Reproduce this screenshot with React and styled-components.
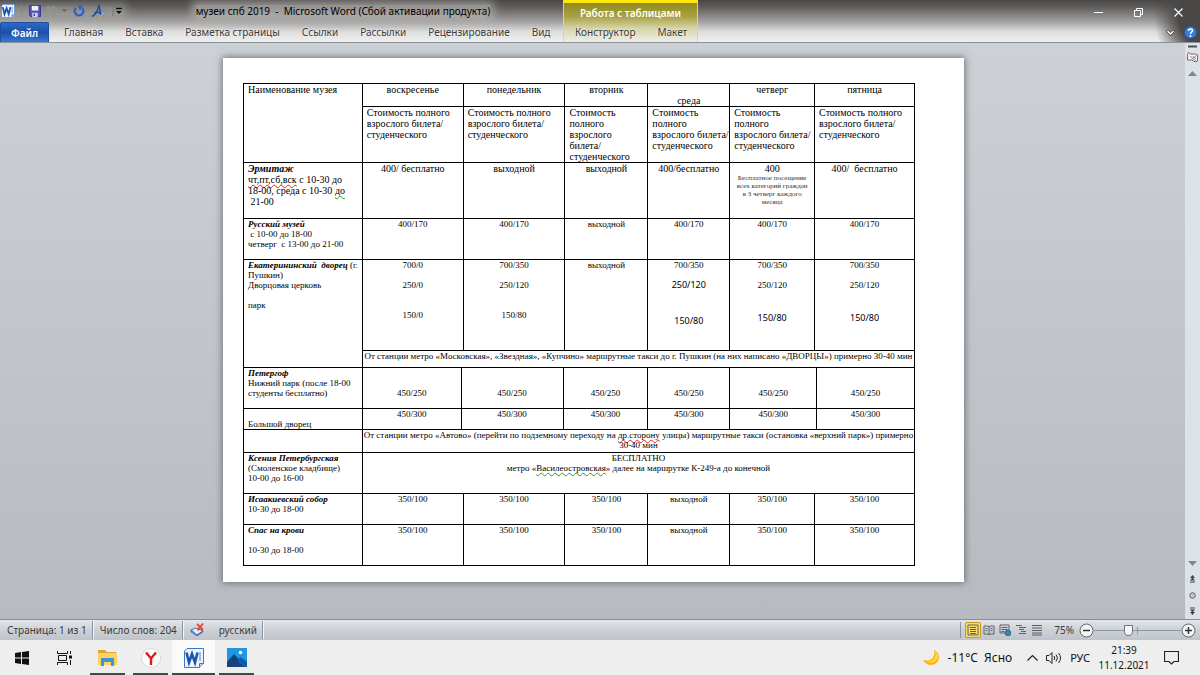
import React from "react";
import styled, { createGlobalStyle } from "styled-components";

const GlobalStyle = createGlobalStyle`
  * {
    box-sizing: border-box;
  }
  body {
    margin: 0;
    font-family: "Noto Sans", "Open Sans", sans-serif;
    font-size: 10px;
    color: #3b3b3b;
  }
  button {
    display: flex;
    align-items: center;
    justify-content: center;
    padding: 0;
    border: 0;
    background: none;
    font: inherit;
    color: inherit;
  }
`;

const Desktop = styled.div`
  display: flex;
  flex-direction: column;
  min-height: 100vh;
`;

/* Шапка окна */
const Header = styled.header`
  display: flex;
  height: 43px;
  overflow: hidden;
  border-bottom: 1px solid #8a9299;
  background: linear-gradient(#4a4846, #5c5a58 15%, #a09f9e 50%, #dcdcdc 75%, #f0f0f0);
`;

const HeaderMain = styled.div`
  display: flex;
  flex-direction: column;
  width: 563px;
`;

const TitleRow = styled.div`
  display: flex;
  align-items: center;
  height: 22px;
`;

const QuickAccess = styled.div`
  display: flex;
  align-items: center;
  gap: 6px;
  width: 123px;
  height: 8px;
  padding-left: 1px;
  background: rgba(190, 189, 188, 0.4);
  box-shadow: 0 0 9px 4px rgba(190, 189, 188, 0.4);
`;

const Title = styled.h1`
  margin: 0 auto;
  font-size: 10px;
  line-height: 12px;
  font-weight: 400;
  white-space: pre;
  color: #000;
  background: rgba(190, 189, 188, 0.6);
  box-shadow: 0 0 10px 4px rgba(190, 189, 188, 0.6);
`;

const Tabs = styled.nav`
  display: flex;
  height: 20px;
`;

const Tab = styled.button`
  padding: 0 11px;
  white-space: nowrap;
  text-shadow: 0 0 3px #fff;
`;

const FileTab = styled(Tab)`
  width: 49px;
  margin-right: 4px;
  border: 1px solid #1e4f9e;
  border-bottom: 0;
  border-radius: 2px 2px 0 0;
  font-weight: 600;
  color: #fff;
  text-shadow: none;
  background: linear-gradient(#2a6acb, #1d4fa6 50%, #3478d6);
`;

const ContextGroup = styled.div`
  width: 135px;
  border: solid #d8d69a;
  border-width: 0 1px;
  border-top: 3px solid #ffe60a;
  background: linear-gradient(#928a1c, #a8a244 35%, #d6d4a8 65%, #efefec);
`;

const ContextTitle = styled.div`
  height: 19px;
  line-height: 21px;
  text-align: center;
  font-weight: 600;
  color: #fff;
`;

const HeaderSide = styled.div`
  flex: 1;
  display: flex;
  flex-direction: column;
  align-items: flex-end;
  background: radial-gradient(ellipse 46px 60px at 100% 40%, #4a4846 45%, rgba(74, 72, 70, 0));
`;

const WindowButtons = styled.div`
  display: flex;
  padding-right: 2px;

  button {
    width: 40px;
    height: 24px;
  }
`;

const HelpRow = styled.div`
  display: flex;
  align-items: center;
  gap: 9px;
  height: 16px;
  padding-right: 3px;
`;

/* Рабочая область */
const Workspace = styled.main`
  flex: 1;
  display: flex;
  border-bottom: 1px solid #8a8d92;
  background: linear-gradient(#cdd1d6, #c3c7cc 45%, #b7bbbf);
`;

const Canvas = styled.div`
  flex: 1;
  padding: 15px 20px 20px 22px;
`;

const Sheet = styled.article`
  max-width: 741px;
  margin: 0 auto;
  padding: 25px 49px 16px 20px;
  background: #fff;
  box-shadow: 0 0 7px 1px #6d747c;
`;

const ScrollBar = styled.div`
  display: flex;
  flex-direction: column;
  width: 15px;
  background: #dde2e9;

  button {
    height: 16px;
  }
  button:first-child {
    height: 6px;
  }
`;

const ScrollTrack = styled.div`
  flex: 1;
`;

/* Таблица музеев */
const Table = styled.table`
  width: 100%;
  table-layout: fixed;
  border-collapse: collapse;
  font-family: "Liberation Serif", "Times New Roman", serif;
  font-size: 9px;
  line-height: 10px;
  color: #000;
`;

const Tr = styled.tr`
  height: ${(props) => props.$height}px;
`;

const Td = styled.td`
  padding: 0 ${(props) => (props.$wide ? 0 : 4)}px;
  border: 1px solid #000;
  vertical-align: top;
  white-space: pre;
  text-align: ${(props) => (props.$left ? "left" : "center")};
  font-size: ${(props) => (props.$large ? 10 : 9)}px;
  line-height: ${(props) => (props.$large ? 11 : 10)}px;
`;

const Th = styled(Td).attrs({ as: "th" })`
  font-weight: 400;
`;

const Name = styled.b`
  font-style: italic;
`;

const Note = styled.div`
  font-size: 7px;
  line-height: 8px;
  color: #333;
`;

const Price = styled.div`
  margin-bottom: ${(props) => props.$gap || 0}px;
  font-family: ${(props) => (props.$sans ? '"Noto Sans", sans-serif' : "inherit")};
`;

const Misspelled = styled.span`
  text-decoration: underline wavy ${(props) => props.$color || "#e02020"} 1px;
  text-decoration-skip-ink: none;
`;

/* Строка состояния */
const StatusBar = styled.footer`
  display: flex;
  align-items: center;
  height: 20px;
  background: linear-gradient(#e3e6ea, #cdd1d7 50%, #bfc4cb);
`;

const StatusItem = styled.div`
  display: flex;
  align-items: center;
  gap: 14px;
  height: 18px;
  padding: 0 5px 0 7px;
  border-right: 1px solid #8d949e;
  box-shadow: 1px 0 #f2f4f6;
  white-space: nowrap;
`;

const StatusSide = styled.div`
  display: flex;
  align-items: center;
  margin-left: auto;
  padding: 0 4px;
  border-left: 1px solid #8d949e;
`;

const ViewButton = styled.button`
  width: 16px;
  height: 16px;
  border-radius: 2px;
  border: 1px solid ${(props) => (props.$active ? "#c79a1e" : "transparent")};
  background: ${(props) => (props.$active ? "#fbdc6a" : "none")};
`;

const ZoomLabel = styled.span`
  margin: 0 5px 0 9px;
`;

const ZoomButton = styled.button`
  width: 15px;
  height: 15px;
`;

const ZoomSlider = styled.input`
  width: 87px;
  height: 14px;
  margin: 0;
  appearance: none;
  background:
    linear-gradient(#8d97a5, #8d97a5) 50% 50% / 1px 7px no-repeat,
    linear-gradient(#8d97a5, #8d97a5) 50% 50% / 100% 1px no-repeat;

  &::-webkit-slider-thumb {
    appearance: none;
    width: 9px;
    height: 11px;
    border: 1px solid #6b7480;
    border-radius: 1px 1px 5px 5px;
    background: #f4f6f8;
  }
`;

/* Панель задач */
const TaskBar = styled.footer`
  display: flex;
  height: 35px;
  background: #eeeeee;
`;

const TaskButton = styled.button`
  width: 43px;
  height: 35px;
  background-color: ${(props) => (props.$active ? "#fafafa" : "transparent")};
  background-image: ${(props) =>
    props.$running || props.$active ? "linear-gradient(#45464a, #45464a)" : "none"};
  background-position: 50% 100%;
  background-size: ${(props) => (props.$active ? "100%" : "35px")} 2px;
  background-repeat: no-repeat;
`;

const Tray = styled.div`
  display: flex;
  align-items: center;
  gap: 8px;
  margin-left: auto;
  padding-right: 21px;
  font-size: 11px;
  color: #111;
`;

const Weather = styled.button`
  gap: 8px;
  margin-right: 7px;
  font-size: 12px;
  white-space: pre;
`;

const Clock = styled.time`
  width: 52px;
  margin-right: 6px;
  font-size: 10px;
  line-height: 15px;
  text-align: center;
`;

const WordIcon = ({ size }) => (
  <svg width={size} height={size} viewBox="0 0 20 20">
    <path d="M3 .5h16.500v15l-4 4H.5V3z" fill="#eef4fc" stroke="#3f76c4" />
    <path d="M15.500 19.500v-4h4" fill="#bcd3f2" stroke="#3f76c4" />
    <path d="M16 4v9" stroke="#9dbbe6" strokeWidth="2" />
    <path d="M2.500 4.500l2.500 10 3-8.500 3 8.500 2.500-10" fill="none" stroke="#1b55a8" strokeWidth="2.600" />
  </svg>
);

const SaveIcon = () => (
  <svg width="12" height="12" viewBox="0 0 13 13">
    <path d="M.5.500h12v12H2l-1.500-1.500z" fill="#5650c0" stroke="#37338f" />
    <path d="M3 1h7v5H3z" fill="#eef0fb" />
    <path d="M3.500 8.500h6V13h-6z" fill="#d0d4ee" />
    <path d="M5 9.500h1.500V12H5z" fill="#37338f" />
  </svg>
);

const UndoIcon = () => (
  <svg width="20" height="12" viewBox="0 0 20 12">
    <path d="M1 1v5h5M1.500 5.500C4 2 8 1 9 4c.8 3-1.500 5-3.500 7" fill="none" stroke="#8f8f8f" strokeWidth="2" />
    <path d="M15 4h5l-2.500 3z" fill="#666" />
  </svg>
);

const RedoIcon = () => (
  <svg width="12" height="12" viewBox="0 0 12 12">
    <path d="M2.800 3a4.400 4.400 0 1 0 6.400 0" fill="none" stroke="#2f62c0" strokeWidth="2.400" />
    <path d="M4.500.500h5.500L7 5.500z" fill="#2f62c0" />
  </svg>
);

const FormatIcon = () => (
  <svg width="15" height="14" viewBox="0 0 15 14">
    <path d="M1 12.500C4 11 7 6 8 1l2 11M3.500 8.500h6" fill="none" stroke="#1f4d9c" strokeWidth="1.500" />
    <path d="M9 12l4-5 1.500 1-4 5z" fill="#a8c4f0" stroke="#3c66aa" strokeWidth=".6" />
    <path d="M8 14l1-3 2.500 1.500z" fill="#e59a2e" />
  </svg>
);

const MoreIcon = () => (
  <svg width="11" height="12" viewBox="0 0 11 12">
    <path d="M1 1v10" stroke="#777" />
    <path d="M4 3.500h6" stroke="#111" strokeWidth="1.500" />
    <path d="M4 6h6L7 9z" fill="#111" />
  </svg>
);

const Arrow = ({ down }) => (
  <svg width="9" height="5" viewBox="0 0 9 5">
    <path d={down ? "M0 0h9L4.500 5z" : "M0 5h9L4.500 0z"} fill="#7a8b8d" />
  </svg>
);

const DoubleArrow = ({ down }) => (
  <svg width="7" height="8" viewBox="0 0 7 8">
    <g transform={down ? "rotate(180 3.500 4)" : undefined} fill="#3c4248">
      <path d="M3.500 0L6 3H1z" />
      <path d="M3.500 2.500L6 5.500H1z" />
      <path d="M1 6.500h5v1H1z" />
    </g>
  </svg>
);

const viewIcons = [
  { label: "Разметка страницы", path: "M1 1h10v10H1zM3 3.500h6M3 5.500h6M3 7.500h6M3 9.500h6" },
  { label: "Режим чтения", path: "M1 2h4l1 1 1-1h4v8H7l-1 1-1-1H1zM6 3v8M2.500 4.500h2M2.500 6.500h2M7.500 4.500h2M7.500 6.500h2" },
  { label: "Веб-документ", path: "M1 1h9v8H1zM2.500 3.500h6M2.500 5.500h6M2.500 7.500h3", globe: true },
  { label: "Структура", path: "M1 1.500h6M4 3.500h7M4 5.500h5M6 7.500h5M4 9.500h7" },
  { label: "Черновик", path: "M1 1.500h10M1 4h10M1 6.500h10M1 9h10M1 11h10" },
];

const tabs = ["Главная", "Вставка", "Разметка страницы", "Ссылки", "Рассылки", "Рецензирование", "Вид"];

// Сетка мельче видимых столбцов: в строках Петергофа границы чуть сдвинуты.
const columns = [119, 99, 2, 100, 2, 83, 82, 85, 2, 98];
const regular = [1, 2, 2, 1, 1, 1, 2];
const shifted = [1, 1, 2, 2, 1, 2, 1];

const long = "Стоимость полного\nвзрослого билета/\nстуденческого";
const medium = "Стоимость\nполного\nвзрослого билета/\nстуденческого";

const days = ["воскресенье", "понедельник", "вторник", "\nсреда", "четверг", "пятница"];
const fares = [long, long, "Стоимость\nполного\nвзрослого\nбилета/\nстуденческого", medium, medium, long];

const Cells = ({ items, spans = regular, large }) =>
  items.map((item, i) => (
    <Td key={i} colSpan={spans[i + 1]} $large={large} $left={items === fares}>
      {item}
    </Td>
  ));

const Palace = ({ prices, sans = [], gap = 20 }) => (
  <>
    <Price $gap={10}>{prices[0]}</Price>
    <Price $gap={gap} $sans={sans[0]}>{prices[1]}</Price>
    <Price $sans={sans[1]}>{prices[2]}</Price>
  </>
);

const MuseumTable = () => (
  <Table>
    <colgroup>
      {columns.map((width, i) => (
        <col key={i} style={{ width: `${(width / 672) * 100}%` }} />
      ))}
    </colgroup>
    <tbody>
      <Tr $height={23}>
        <Th rowSpan={2} $left $large>Наименование музея</Th>
        {days.map((day, i) => (
          <Th key={day} scope="col" colSpan={regular[i + 1]} $large>{day}</Th>
        ))}
      </Tr>
      <Tr $height={56}>
        <Cells items={fares} large />
      </Tr>
      <Tr $height={56}>
        <Th scope="row" $left $large>
          <Name>Эрмитаж</Name>{"\n"}
          <Misspelled>чт,пт,сб,вск</Misspelled> с 10-30 до{"\n"}
          18-00, среда с 10-30 <Misspelled $color="#2a9a2a">до</Misspelled>{"\n 21-00"}
        </Th>
        <Cells
          large
          items={[
            "400/ бесплатно",
            "выходной",
            "выходной",
            "400/бесплатно",
            <>
              400
              <Note>{"Бесплатное посещение\nвсех категорий граждан\nв 3 четверг каждого\nмесяца"}</Note>
            </>,
            "400/  бесплатно",
          ]}
        />
      </Tr>
      <Tr $height={41}>
        <Th scope="row" $left><Name>Русский музей</Name>{"\n с 10-00 до 18-00\nчетверг  с 13-00 до 21-00"}</Th>
        <Cells items={["400/170", "400/170", "выходной", "400/170", "400/170", "400/170"]} />
      </Tr>
      <Tr $height={91}>
        <Th scope="row" rowSpan={2} $left>
          <Name>Екатерининский  дворец</Name>{" (г.\nПушкин)\nДворцовая церковь\n\nпарк"}
        </Th>
        <Cells
          items={[
            <Palace prices={["700/0", "250/0", "150/0"]} />,
            <Palace prices={["700/350", "250/120", "150/80"]} />,
            "выходной",
            <Palace prices={["700/350", "250/120", "150/80"]} sans={[true, true]} gap={26} />,
            <Palace prices={["700/350", "250/120", "150/80"]} sans={[false, true]} gap={23} />,
            <Palace prices={["700/350", "250/120", "150/80"]} sans={[false, true]} gap={23} />,
          ]}
        />
      </Tr>
      <Tr $height={17}>
        <Td colSpan={9} $wide>
          От станции метро «Московская», «Звездная», «Купчино» маршрутные такси до г. Пушкин (на них написано «ДВОРЦЫ») примерно 30-40 мин
        </Td>
      </Tr>
      <Tr $height={41}>
        <Th scope="row" $left><Name>Петергоф</Name>{"\nНижний парк (после 18-00\nстуденты бесплатно)"}</Th>
        <Cells spans={shifted} items={Array(6).fill("\n\n450/250")} />
      </Tr>
      <Tr $height={21}>
        <Th scope="row" $left>{"\nБольшой дворец"}</Th>
        <Cells spans={shifted} items={Array(6).fill("450/300")} />
      </Tr>
      <Tr $height={23}>
        <Td />
        <Td colSpan={9} $wide>
          От станции метро «Автово» (перейти по подземному переходу на <Misspelled>др.сторону</Misspelled> улицы) маршрутные такси (остановка «верхний парк») примерно{"\n30-40 мин"}
        </Td>
      </Tr>
      <Tr $height={41}>
        <Th scope="row" $left><Name>Ксения Петербургская</Name>{"\n(Смоленское кладбище)\n10-00 до 16-00"}</Th>
        <Td colSpan={9}>
          БЕСПЛАТНО{"\n"}метро «<Misspelled $color="#2a9a2a">Василеостровская</Misspelled>» далее на маршрутке К-249-а до конечной
        </Td>
      </Tr>
      <Tr $height={31}>
        <Th scope="row" $left><Name>Исаакиевский собор</Name>{"\n10-30 до 18-00"}</Th>
        <Cells items={["350/100", "350/100", "350/100", "выходной", "350/100", "350/100"]} />
      </Tr>
      <Tr $height={41}>
        <Th scope="row" $left><Name>Спас на крови</Name>{"\n\n10-30 до 18-00"}</Th>
        <Cells items={["350/100", "350/100", "350/100", "выходной", "350/100", "350/100"]} />
      </Tr>
    </tbody>
  </Table>
);

const WindowHeader = () => (
  <Header>
    <HeaderMain>
      <TitleRow>
        <QuickAccess>
          <WordIcon size={14} />
          <svg width="2" height="12"><path d="M.5 0v12" stroke="#8a8a8a" /></svg>
          <button aria-label="Сохранить"><SaveIcon /></button>
          <button aria-label="Отменить"><UndoIcon /></button>
          <button aria-label="Повторить"><RedoIcon /></button>
          <button aria-label="Формат"><FormatIcon /></button>
          <button aria-label="Настройка панели"><MoreIcon /></button>
        </QuickAccess>
        <Title>музеи спб 2019  -  Microsoft Word (Сбой активации продукта)</Title>
      </TitleRow>
      <Tabs>
        <FileTab>Файл</FileTab>
        {tabs.map((tab) => (
          <Tab key={tab}>{tab}</Tab>
        ))}
      </Tabs>
    </HeaderMain>
    <ContextGroup>
      <ContextTitle>Работа с таблицами</ContextTitle>
      <Tabs>
        <Tab>Конструктор</Tab>
        <Tab>Макет</Tab>
      </Tabs>
    </ContextGroup>
    <HeaderSide>
      <WindowButtons>
        <button aria-label="Свернуть">
          <svg width="9" height="9"><path d="M0 4.500h9" stroke="#fff" /></svg>
        </button>
        <button aria-label="Восстановить">
          <svg width="9" height="9" fill="none" stroke="#fff"><path d="M.5 2.500h6v6h-6zM2.500 2.500v-2h6v6h-2" /></svg>
        </button>
        <button aria-label="Закрыть">
          <svg width="9" height="9"><path d="M.5.500l8 8M8.500.500l-8 8" stroke="#fff" strokeWidth="1.200" /></svg>
        </button>
      </WindowButtons>
      <HelpRow>
        <button aria-label="Лента">
          <svg width="9" height="7" fill="none">
            <path d="M1 1.500l3.500 3.500L8 1.500" stroke="#444" strokeWidth="3" />
            <path d="M1.500 2l3 3 3-3" stroke="#fff" strokeWidth="1.500" />
          </svg>
        </button>
        <button aria-label="Справка">
          <svg width="13" height="13" viewBox="0 0 13 13">
            <circle cx="6.500" cy="6.500" r="6" fill="#3c7bd6" stroke="#2358a8" />
            <path d="M4.500 5c0-3 4-2.500 4-.5C8.500 6 6.500 6 6.500 8" fill="none" stroke="#fff" strokeWidth="1.500" />
            <circle cx="6.500" cy="10" r="1" fill="#fff" />
          </svg>
        </button>
      </HelpRow>
    </HeaderSide>
  </Header>
);

const VerticalScroll = () => (
  <ScrollBar>
    <button aria-label="Разделить">
      <svg width="15" height="6"><path d="M3 3.500h9" stroke="#4b5157" strokeWidth="2" /></svg>
    </button>
    <button aria-label="Линейка">
      <svg width="11" height="11" viewBox="0 0 11 11" fill="#f3eef0" stroke="#75696e">
        <path d="M.5 2.500l1-2 2 1.500h5l2 1v6l-2 1-4-2h-4z" />
        <path d="M3 4l6 5M6 4l3 3M9 3.500l-4 4" strokeWidth=".7" />
      </svg>
    </button>
    <button aria-label="Вверх"><Arrow /></button>
    <ScrollTrack />
    <button aria-label="Вниз"><Arrow down /></button>
    <button aria-label="Предыдущая страница"><DoubleArrow /></button>
    <button aria-label="Выбор объекта">
      <svg width="7" height="7"><circle cx="3.500" cy="3.500" r="2.800" fill="#c2c5c9" stroke="#62676d" /></svg>
    </button>
    <button aria-label="Следующая страница"><DoubleArrow down /></button>
  </ScrollBar>
);

const Status = () => (
  <StatusBar>
    <StatusItem>Страница: 1 из 1</StatusItem>
    <StatusItem>Число слов: 204</StatusItem>
    <StatusItem>
      <svg width="15" height="14" viewBox="0 0 15 14">
        <path d="M1 7l5-2 7 3-6 4z" fill="#e9effa" stroke="#4a6db4" />
        <path d="M1 7v2l6 4 6-4V8l-6 4z" fill="#7f9cd6" stroke="#36569c" strokeWidth=".6" />
        <path d="M7 1l6 6M13 .5L7.500 7.500" stroke="#e8452c" strokeWidth="1.800" />
      </svg>
      русский
    </StatusItem>
    <StatusSide>
      {viewIcons.map((view, i) => (
        <ViewButton key={view.label} aria-label={view.label} $active={i === 0}>
          <svg width="12" height="12" viewBox="0 0 12 12">
            <path d={view.path} fill="none" stroke="#5c6168" />
            {view.globe && <circle cx="9" cy="9" r="2.800" fill="#2f8fae" stroke="#246b8c" />}
          </svg>
        </ViewButton>
      ))}
      <ZoomLabel>75%</ZoomLabel>
      <ZoomButton aria-label="Уменьшить">
        <svg width="15" height="15">
          <circle cx="7.500" cy="7.500" r="6.500" fill="#f4f5f7" stroke="#62676e" />
          <path d="M4 7.500h7" stroke="#333" strokeWidth="1.500" />
        </svg>
      </ZoomButton>
      <ZoomSlider type="range" aria-label="Масштаб" defaultValue={38} />
      <ZoomButton aria-label="Увеличить">
        <svg width="15" height="15">
          <circle cx="7.500" cy="7.500" r="6.500" fill="#f4f5f7" stroke="#62676e" />
          <path d="M4 7.500h7M7.500 4v7" stroke="#333" strokeWidth="1.500" />
        </svg>
      </ZoomButton>
    </StatusSide>
  </StatusBar>
);

const WindowsBar = () => (
  <TaskBar>
    <TaskButton aria-label="Пуск">
      <svg width="14" height="14" viewBox="0 0 14 14">
        <path d="M0 2l6-.9v5.400H0zM7 1l7-1v6.500H7zM0 7.500h6V13l-6-.9zM7 7.500h7V14l-7-1z" fill="#111" />
      </svg>
    </TaskButton>
    <TaskButton aria-label="Представление задач">
      <svg width="16" height="14" viewBox="0 0 16 14" fill="none" stroke="#111">
        <path d="M.5 0v2.500h10V0M.5 14v-2.500h10V14M1.500 4.500h8v5h-8zM13.500 0v3M13.500 9v5" />
        <path d="M12 4.500h3v3h-3z" fill="#111" stroke="none" />
      </svg>
    </TaskButton>
    <TaskButton aria-label="Проводник" $running>
      <svg width="19" height="17" viewBox="0 0 19 17">
        <path d="M0 1h7l2 2h9v4H0z" fill="#e0a52a" />
        <path d="M0 4h19v12H0z" fill="#fbd35e" />
        <path d="M3 9h13v8h-3v-4H6v4H3z" fill="#3d95dc" />
      </svg>
    </TaskButton>
    <TaskButton aria-label="Яндекс.Браузер" $running>
      <svg width="20" height="20" viewBox="0 0 20 20">
        <circle cx="10" cy="10" r="9.500" fill="#fbfbfb" stroke="#d8d8d8" />
        <path d="M5 4.500l5 6 5-6M10 10v7" fill="none" stroke="#dc1a1a" strokeWidth="2.400" />
      </svg>
    </TaskButton>
    <TaskButton aria-label="Word" $active>
      <WordIcon size={20} />
    </TaskButton>
    <TaskButton aria-label="Фотографии" $running>
      <svg width="20" height="19" viewBox="0 0 20 19">
        <path d="M0 0h20v19H0z" fill="#2196e3" />
        <path d="M0 14l7-8 12 13H0z" fill="#17407c" />
        <path d="M10 12l4-3 6 5v5h-4z" fill="#0f5ba8" />
        <circle cx="13.500" cy="4.500" r="1.800" fill="#fff" />
      </svg>
    </TaskButton>
    <Tray>
      <Weather>
        <svg width="17" height="17" viewBox="0 0 17 17">
          <path d="M11 1c7 3 6 11 1 14-4 2-9 1-12-4 8 2 13-3 11-10z" fill="#fbb615" />
          <path d="M12 2c4 3 4 9-1 11-3 1-6 0-8-1 8 1 11-4 9-10z" fill="#ffd74a" />
        </svg>
        -11°C  Ясно
      </Weather>
      <svg width="11" height="7"><path d="M.5 6.500l5-5 5 5" fill="none" stroke="#222" strokeWidth="1.200" /></svg>
      <svg width="16" height="14" viewBox="0 0 16 14" fill="none" stroke="#222">
        <path d="M.5 4.500h2.500l3-3v11l-3-3H.5zM8 5q1.500 2 0 4M10 3.500q3 3.500 0 7M12.500 2q4 5 0 10" />
      </svg>
      <span>РУС</span>
      <Clock>21:39<br />11.12.2021</Clock>
      <svg width="15" height="15" viewBox="0 0 15 15"><path d="M.5 1.500h14v10H10L7.500 14 5 11.500H.5z" fill="none" stroke="#222" strokeWidth="1.200" /></svg>
    </Tray>
  </TaskBar>
);

const App = () => (
  <Desktop>
    <GlobalStyle />
    <WindowHeader />
    <Workspace>
      <Canvas>
        <Sheet>
          <MuseumTable />
        </Sheet>
      </Canvas>
      <VerticalScroll />
    </Workspace>
    <Status />
    <WindowsBar />
  </Desktop>
);

export default App;
